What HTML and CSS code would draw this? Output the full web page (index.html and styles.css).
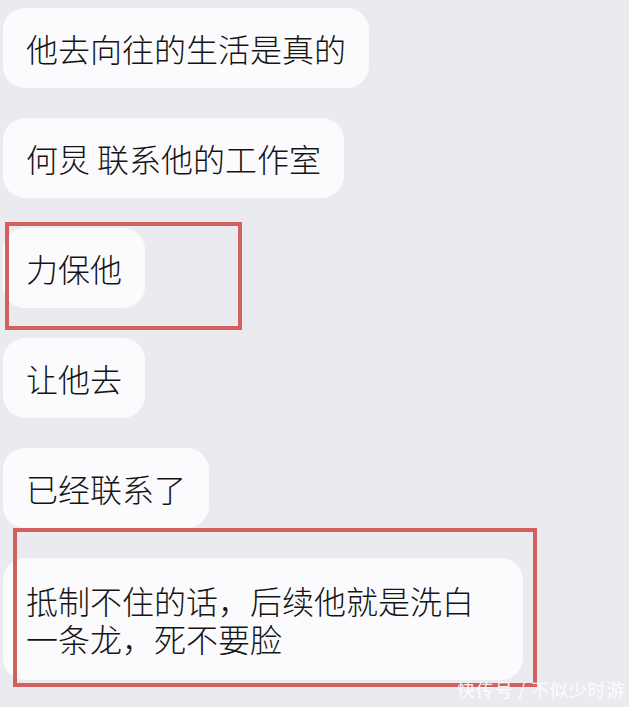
FILE: index.html
```html
<!DOCTYPE html>
<html lang="zh-CN">
<head>
    <meta charset="UTF-8">
    <meta name="viewport" content="width=device-width, initial-scale=1.0">
    <title>聊天截图</title>
    <link rel="stylesheet" href="styles.css">
</head>
<body>
    <div class="chat">
        <div class="bubble">他去向往的生活是真的</div>
        <div class="bubble">何炅 联系他的工作室</div>
        <div class="bubble">力保他</div>
        <div class="bubble">让他去</div>
        <div class="bubble">已经联系了</div>
        <div class="bubble wide">抵制不住的话，后续他就是洗白一条龙，死不要脸</div>

        <!-- red highlight frames -->
        <div class="mark mark-one"></div>
        <div class="mark mark-two"></div>

        <div class="watermark">快传号 / 不似少时游</div>
    </div>
</body>
</html>
```

FILE: styles.css
```css
* {
    margin: 0;
    padding: 0;
    box-sizing: border-box;
}

body {
    background-color: #ebebef;
    font-family: "Noto Sans CJK SC", "Noto Sans", sans-serif;
    height: 707px;
    overflow: hidden;
}

.chat {
    position: relative;
    height: 707px;
    padding: 8px 0 0 3px;
    display: flex;
    flex-direction: column;
    align-items: flex-start;
    gap: 30px;
}

.bubble {
    background-color: #fbfbfd;
    color: #141414;
    font-size: 32px;
    font-weight: 300;
    line-height: 36px;
    padding: 22px 23px;
    border-radius: 22px;
    max-width: 520px;
}

.bubble.wide {
    line-height: 38px;
    padding: 23px;
}

.mark {
    position: absolute;
    border: 4px solid #d2605f;
}

.mark-one {
    left: 5px;
    top: 222px;
    width: 237px;
    height: 108px;
}

.mark-two {
    left: 13px;
    top: 528px;
    width: 524px;
    height: 159px;
}

.watermark {
    position: absolute;
    right: 4px;
    bottom: 5px;
    font-size: 18px;
    color: rgba(255, 255, 255, 0.9);
    letter-spacing: 0.8px;
}
```
